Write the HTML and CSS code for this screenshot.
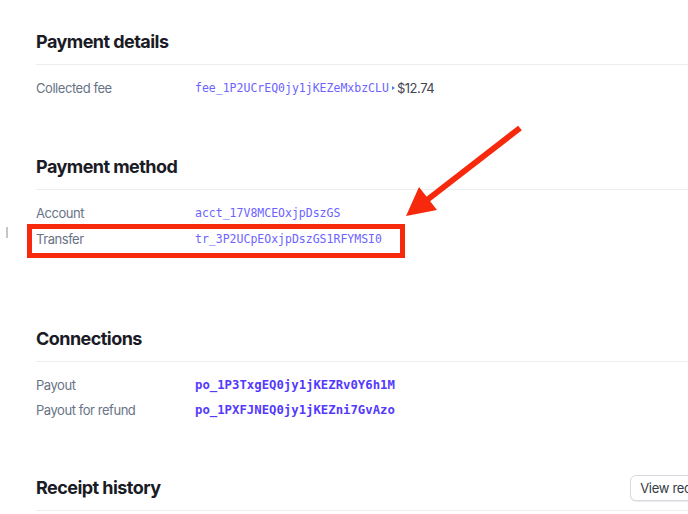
FILE: index.html
```html
<!DOCTYPE html>
<html lang="en">
<head>
<meta charset="utf-8">
<title>Payment</title>
<link rel="stylesheet" href="styles.css">
</head>
<body>
<div class="page">
  <section class="section">
    <div class="section-head"><h2>Payment details</h2></div>
    <div class="rows">
      <div class="row">
        <span class="label">Collected fee</span>
        <span class="value"><a class="id">fee_1P2UCrEQ0jy1jKEZeMxbzCLU</a><span class="caret"></span><span class="amount">$12.74</span></span>
      </div>
    </div>
  </section>

  <section class="section s-method">
    <div class="section-head"><h2>Payment method</h2></div>
    <div class="rows">
      <div class="row">
        <span class="label">Account</span>
        <span class="value"><a class="id">acct_17V8MCEOxjpDszGS</a></span>
      </div>
      <div class="row">
        <span class="label">Transfer</span>
        <span class="value"><a class="id">tr_3P2UCpEOxjpDszGS1RFYMSI0</a></span>
      </div>
    </div>
  </section>

  <section class="section s-conn">
    <div class="section-head"><h2>Connections</h2></div>
    <div class="rows tight">
      <div class="row">
        <span class="label">Payout</span>
        <span class="value"><a class="id strong">po_1P3TxgEQ0jy1jKEZRv0Y6h1M</a></span>
      </div>
      <div class="row">
        <span class="label">Payout for refund</span>
        <span class="value"><a class="id strong">po_1PXFJNEQ0jy1jKEZni7GvAzo</a></span>
      </div>
    </div>
  </section>

  <section class="section s-receipt">
    <div class="section-head"><h2>Receipt history</h2><button class="btn">View receipt</button></div>
  </section>
</div>

<div class="edge-mark"></div>
<div class="annot-box"></div>
<svg class="annot-arrow" width="688" height="514" viewBox="0 0 688 514">
  <line x1="520" y1="128" x2="427" y2="200" stroke="#f6290c" stroke-width="6" stroke-linecap="butt"/>
  <polygon points="406,216 419,187 437,210" fill="#f6290c"/>
</svg>
</body>
</html>
```

FILE: styles.css
```css
html, body {
  margin: 0;
  padding: 0;
  background: #ffffff;
}
body {
  overflow: hidden;
  position: relative;
  width: 688px;
  height: 514px;
  font-family: Inter, "Noto Sans", "Liberation Sans", sans-serif;
  color: #414552;
}
.page {
  width: 688px;
  padding: 30px 0 0 36px;
}
.section-head {
  display: flex;
  justify-content: space-between;
  align-items: center;
  height: 24px;
  padding-bottom: 10px;
  border-bottom: 1px solid #ebeef1;
}
.section-head h2 {
  margin: 0;
  font-size: 18px;
  line-height: 24px;
  font-weight: 700;
  color: #1a1b25;
  letter-spacing: -0.55px;
}
.s-method { margin-top: 54px; }
.s-conn { margin-top: 75px; }
.s-receipt { margin-top: 54px; }
.rows { padding-top: 10px; }
.row {
  display: grid;
  grid-template-columns: 159px auto;
  align-items: center;
  height: 26px;
  font-size: 13px;
  letter-spacing: -0.45px;
}
.rows.tight .row { height: 25px; }
.label { color: #687385; }
.value {
  display: flex;
  align-items: center;
}
.id {
  font-family: "DejaVu Sans Mono", "Liberation Mono", monospace;
  font-size: 11.5px;
  letter-spacing: 0;
  color: #6c63ff;
  text-decoration: none;
}
.id.strong {
  font-size: 12.3px;
  font-weight: 700;
  color: #533afd;
}
.caret {
  width: 0;
  height: 0;
  border-left: 3px solid #3b82f6;
  border-top: 2.5px solid transparent;
  border-bottom: 2.5px solid transparent;
  margin: 0 2px 0 3px;
}
.amount { color: #414552; }
.btn {
  height: 26px;
  padding: 0 10px 0 9px;
  font-family: inherit;
  font-size: 13px;
  letter-spacing: -0.3px;
  color: #353a44;
  background: #ffffff;
  border: 1px solid #d5dbe1;
  border-radius: 6px;
  box-shadow: 0 1px 1px rgba(0, 0, 0, 0.08);
}
.edge-mark {
  position: absolute;
  left: 6px;
  top: 227px;
  width: 2px;
  height: 11px;
  background: #c6c6c8;
}
.annot-box {
  position: absolute;
  left: 27px;
  top: 224px;
  width: 378px;
  height: 34px;
  box-sizing: border-box;
  border: 5px solid #f6290c;
}
.annot-arrow {
  position: absolute;
  left: 0;
  top: 0;
  pointer-events: none;
}
```
